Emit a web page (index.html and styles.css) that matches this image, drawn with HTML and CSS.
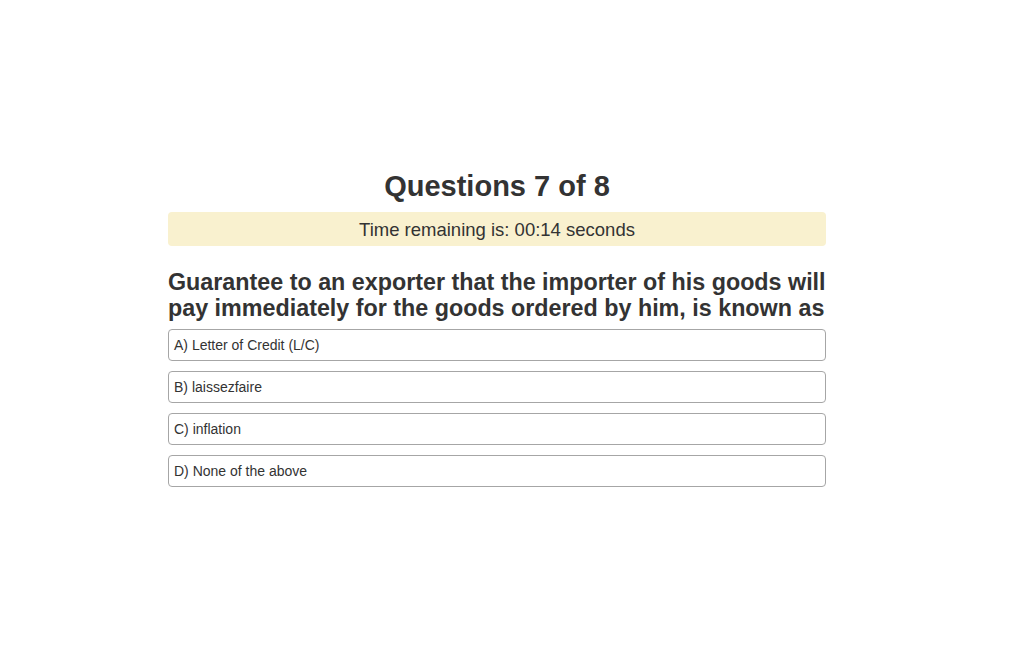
FILE: index.html
```html
<!DOCTYPE html>
<html>
<head>
<meta charset="utf-8">
<link rel="stylesheet" href="styles.css">
</head>
<body>
<div class="quiz">
  <h1 class="title">Questions 7 of 8</h1>
  <div class="timer">Time remaining is: 00:14 seconds</div>
  <h2 class="question">Guarantee to an exporter that the importer of his goods will pay immediately for the goods ordered by him, is known as</h2>
  <div class="options">
    <div class="option">A) Letter of Credit (L/C)</div>
    <div class="option">B) laissezfaire</div>
    <div class="option">C) inflation</div>
    <div class="option">D) None of the above</div>
  </div>
</div>
</body>
</html>
```
FILE: styles.css
```css
html, body {
  margin: 0;
  padding: 0;
  background: #fff;
}
body {
  font-family: "Liberation Sans", Arial, Helvetica, sans-serif;
  color: #333;
  padding-right: 17px;
}
.quiz {
  width: 658px;
  margin: 0 auto;
  padding-top: 168px;
}
.title {
  margin: 0;
  text-align: center;
  font-size: 29px;
  font-weight: 700;
  line-height: 36px;
}
.timer {
  margin-top: 8px;
  height: 34px;
  line-height: 35px;
  background: #f9f1cf;
  border-radius: 4px;
  text-align: center;
  font-size: 18.5px;
}
.question {
  margin: 23px 0 0;
  font-size: 23.3px;
  line-height: 26px;
  font-weight: 700;
}
.options {
  margin-top: 8px;
  display: flex;
  flex-direction: column;
  gap: 10px;
}
.option {
  height: 30px;
  line-height: 30px;
  border: 1px solid #a6a6a6;
  border-radius: 4px;
  padding: 0 5px;
  font-size: 14px;
}
```
